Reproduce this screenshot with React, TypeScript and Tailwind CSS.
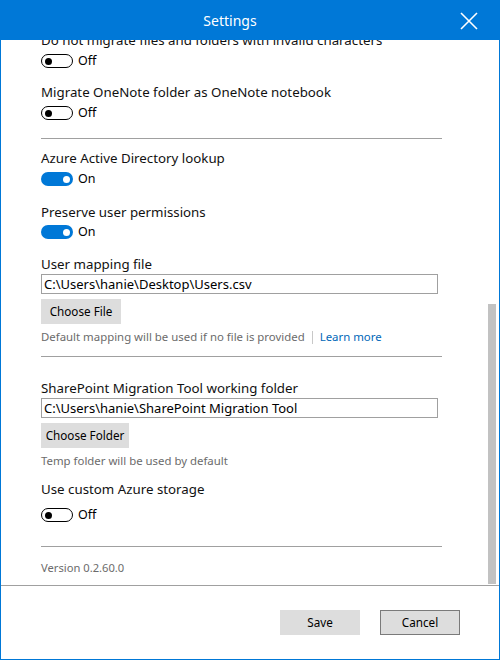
import React from 'react';

const font = "font-['Segoe_UI','Noto_Sans',sans-serif]";

const Toggle: React.FC<{ on?: boolean; className?: string }> = ({ on, className = '' }) => (
  <div className={`flex items-center h-[14px] ${className}`}>
    {on ? (
      <div className="w-[32px] h-[14px] rounded-full bg-[#0078d7] flex items-center justify-end pr-[3px]">
        <div className="w-[7px] h-[7px] rounded-full bg-white" />
      </div>
    ) : (
      <div className="w-[32px] h-[14px] rounded-full border-[1.5px] border-black flex items-center pl-[2.5px]">
        <div className="w-[7px] h-[7px] rounded-full bg-black" />
      </div>
    )}
    <span className="ml-[5px] text-[12.5px] leading-[14px] text-black">{on ? 'On' : 'Off'}</span>
  </div>
);

const Label: React.FC<{ children: React.ReactNode; className?: string }> = ({ children, className = '' }) => (
  <div className={`h-[20px] leading-[20px] text-[13.3px] text-[#111] whitespace-nowrap ${className}`}>{children}</div>
);

const Divider: React.FC<{ className?: string }> = ({ className = '' }) => (
  <div className={`w-[401px] h-px bg-[#a0a0a0] ${className}`} />
);

const PathInput: React.FC<{ value: string }> = ({ value }) => (
  <div className="w-[397px] h-[20px] border border-[#a0a0a0] px-[2px] text-[13px] leading-[18px] text-black whitespace-nowrap overflow-hidden">
    {value}
  </div>
);

const GrayButton: React.FC<{ children: React.ReactNode; className?: string }> = ({ children, className = '' }) => (
  <button className={`h-[25px] bg-[#dddddd] text-[11.7px] text-black ${className}`}>{children}</button>
);

export default function App() {
  return (
    <div className={`w-[500px] h-[660px] bg-white flex flex-col border-x border-b border-[#0078d7] ${font}`}>
      <div className="h-[40px] bg-[#0078d7] -mx-px flex items-center shrink-0">
        <div className="w-[460px] text-center text-white text-[14px]">Settings</div>
        <svg width="18" height="18" viewBox="0 0 18 18" className="mt-[1px]">
          <path d="M1 1 L17 17 M17 1 L1 17" stroke="white" strokeWidth="1.6" />
        </svg>
      </div>

      <div className="h-[545px] flex overflow-hidden shrink-0">
        <div className="flex-1 pl-[40px] overflow-hidden">
          <div className="-mt-[10px] flex flex-col">
            <Label>Do not migrate files and folders with invalid characters</Label>
            <Toggle className="mt-[4px]" />
            <Label className="mt-[14px]">Migrate OneNote folder as OneNote notebook</Label>
            <Toggle className="mt-[4px]" />
            <Divider className="mt-[18px]" />
            <Label className="mt-[9px]">Azure Active Directory lookup</Label>
            <Toggle on className="mt-[4px]" />
            <Label className="mt-[16px]">Preserve user permissions</Label>
            <Toggle on className="mt-[3px]" />
            <Label className="mt-[15px] h-[19px] leading-[19px]">User mapping file</Label>
            <PathInput value="C:\Users\hanie\Desktop\Users.csv" />
            <GrayButton className="mt-[5px] w-[80px]">Choose File</GrayButton>
            <div className="mt-[5px] h-[16px] flex items-center text-[11.4px] whitespace-nowrap">
              <span className="text-[#6b6b6b]">Default mapping will be used if no file is provided</span>
              <span className="mx-[7px] w-px h-[13px] bg-[#c8c8c8]" />
              <span className="text-[#0067b8]">Learn more</span>
            </div>
            <Divider className="mt-[11px]" />
            <Label className="mt-[21px] h-[19px] leading-[19px]">SharePoint Migration Tool working folder</Label>
            <PathInput value="C:\Users\hanie\SharePoint Migration Tool" />
            <GrayButton className="mt-[5px] w-[88px]">Choose Folder</GrayButton>
            <div className="mt-[5px] h-[16px] leading-[16px] text-[11.4px] text-[#6b6b6b]">Temp folder will be used by default</div>
            <Label className="mt-[10px]">Use custom Azure storage</Label>
            <Toggle className="mt-[9px]" />
            <Divider className="mt-[24px]" />
            <div className="mt-[13px] h-[16px] leading-[16px] text-[11.2px] text-[#6b6b6b]">Version 0.2.60.0</div>
          </div>
        </div>
        <div className="w-[8px] mr-[3px] flex flex-col">
          <div className="h-[264px]" />
          <div className="flex-1 bg-[#c2c2c2] mb-px" />
        </div>
      </div>

      <div className="h-px bg-[#a0a0a0] shrink-0" />
      <div className="flex-1 flex justify-end items-start pt-[24px] pr-[39px] gap-[20px]">
        <GrayButton className="w-[80px]">Save</GrayButton>
        <GrayButton className="w-[80px] border border-[#7a7a7a]">Cancel</GrayButton>
      </div>
    </div>
  );
}
